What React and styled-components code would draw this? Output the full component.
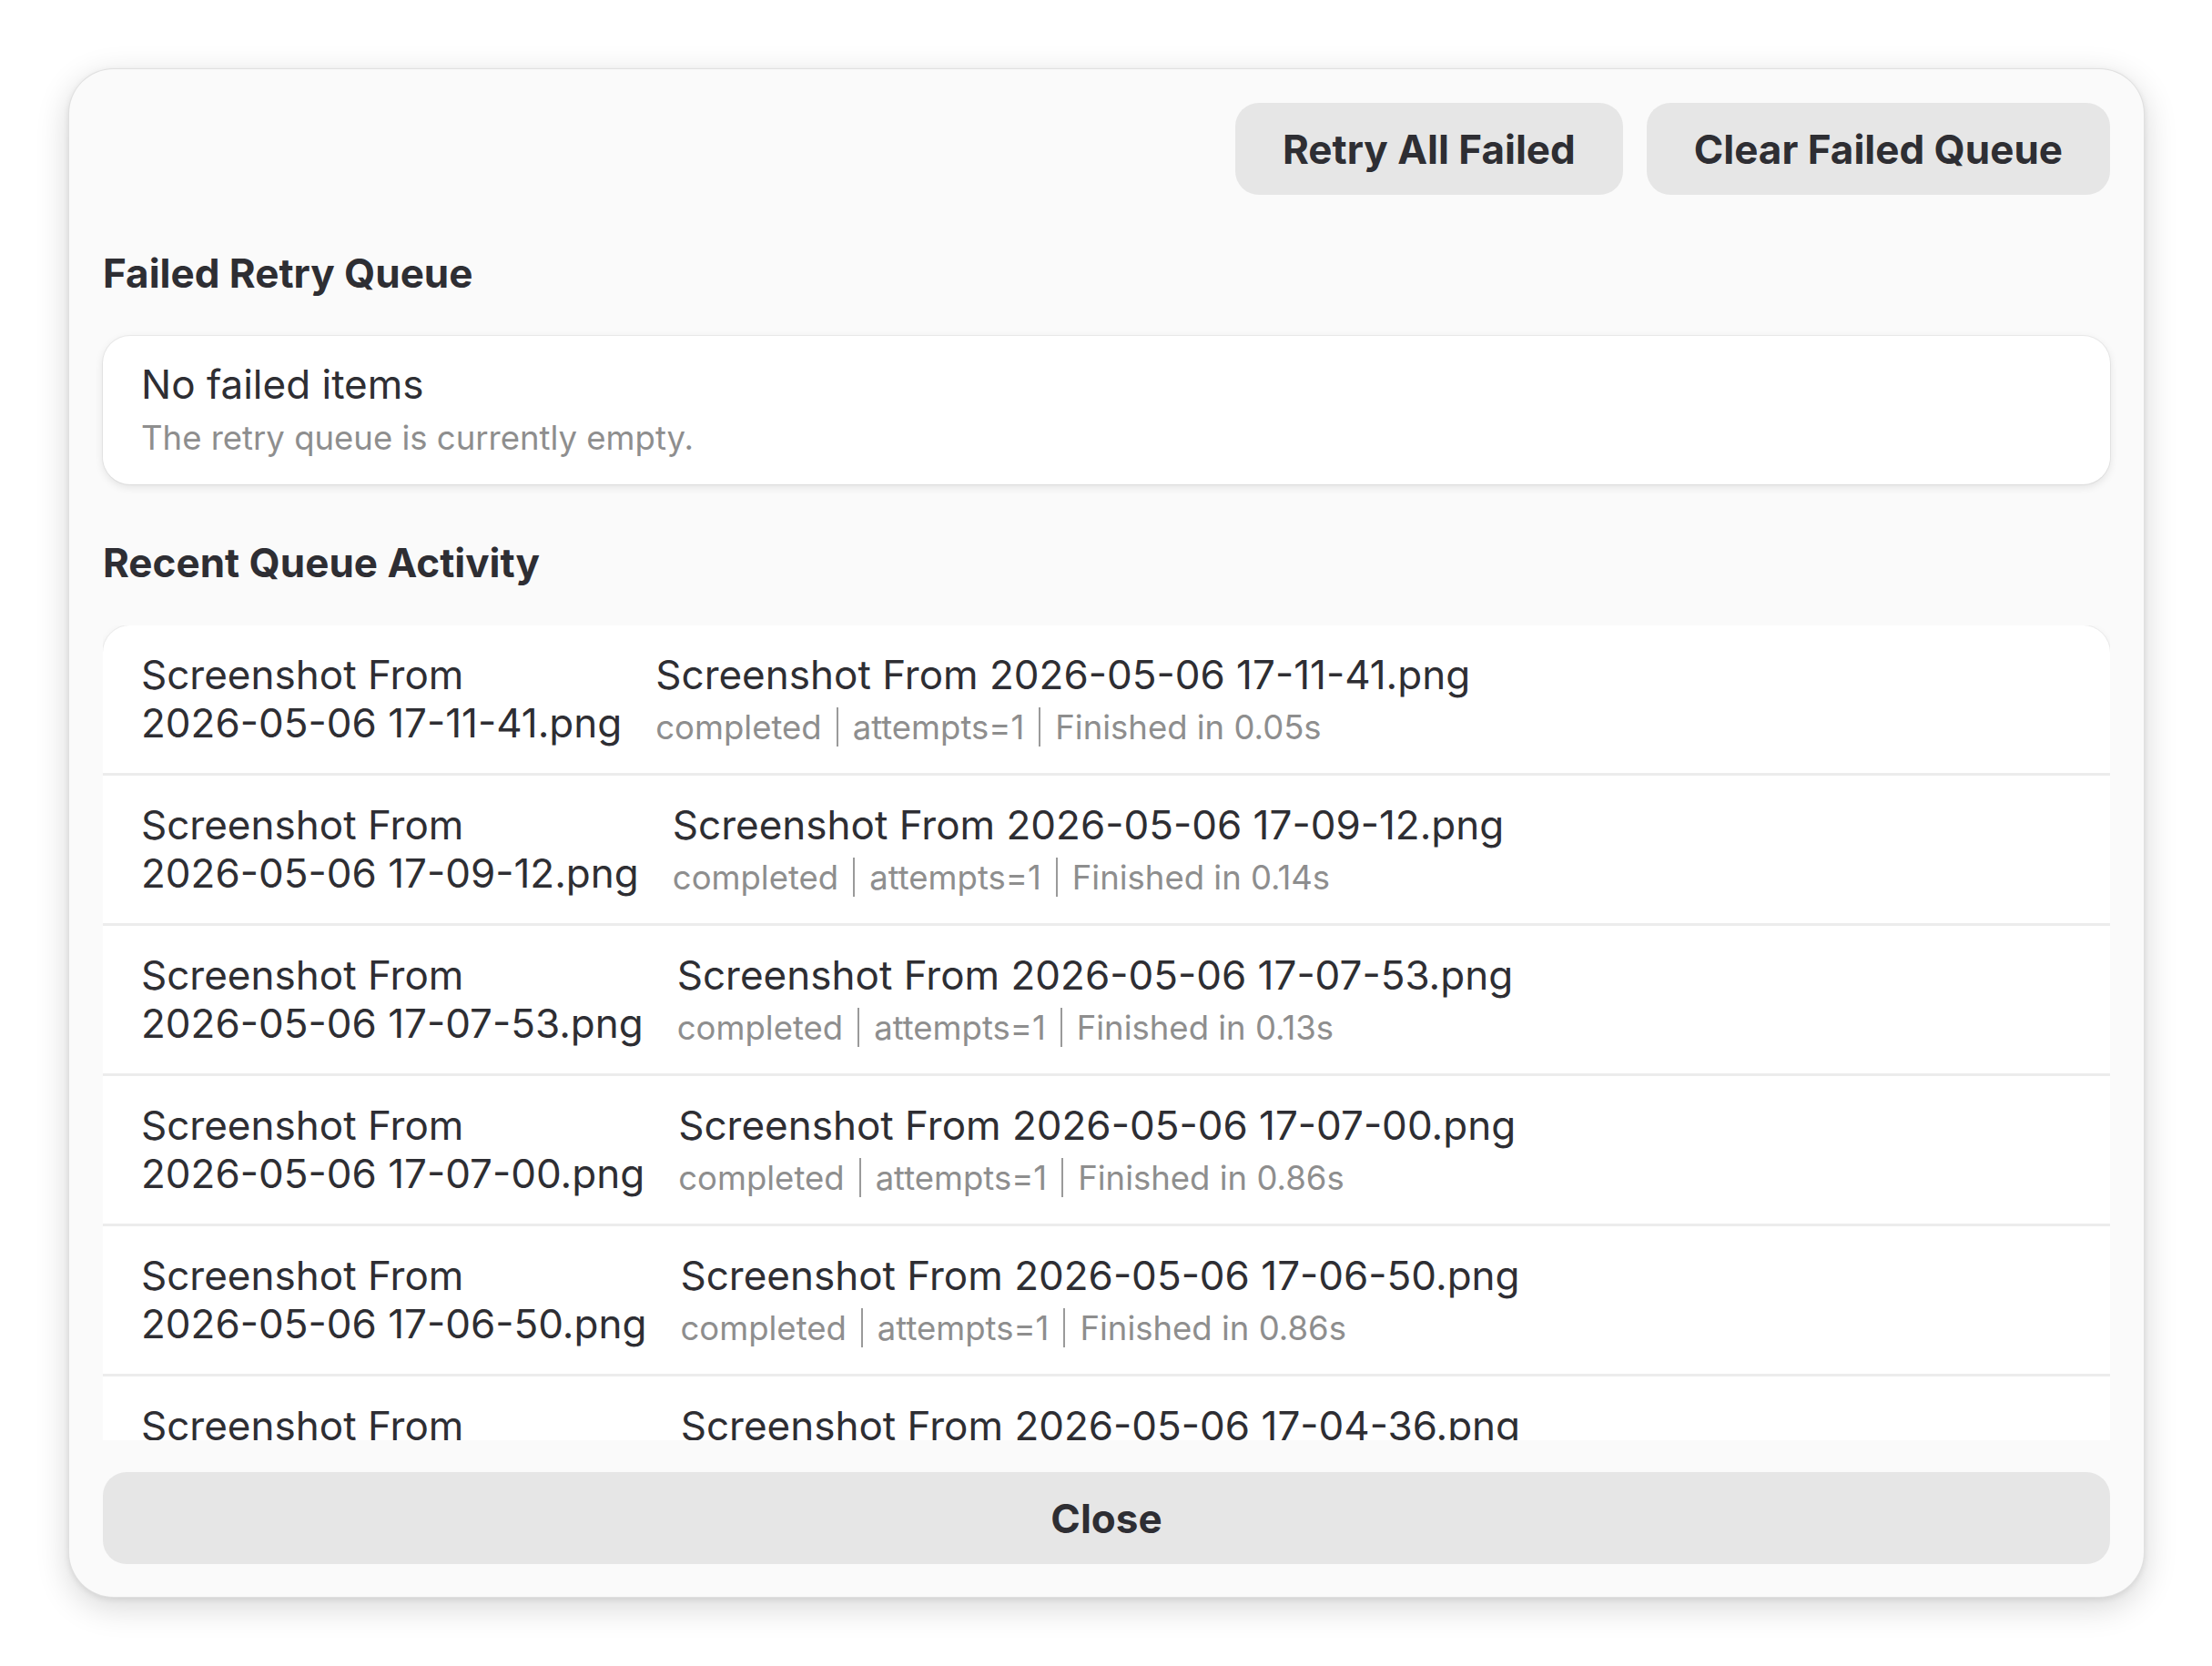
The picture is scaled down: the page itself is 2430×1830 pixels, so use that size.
import styled, { createGlobalStyle } from 'styled-components';

const GlobalStyle = createGlobalStyle`
  html, body {
    margin: 0;
    padding: 0;
    background: #ffffff;
    font-family: Inter, "Noto Sans", "Liberation Sans", sans-serif;
    color: #2e2e33;
  }
  * {
    box-sizing: border-box;
  }
`;

const Page = styled.div`
  width: 100vw;
  height: 100vh;
  padding: 75px 74px 75px 75px;
`;

const Dialog = styled.div`
  height: 100%;
  display: flex;
  flex-direction: column;
  padding: 37px 37px 36px;
  background: #fafafa;
  border: 1px solid rgba(0, 0, 0, 0.1);
  border-radius: 50px;
  box-shadow: 0 10px 36px rgba(0, 0, 0, 0.16), 0 2px 6px rgba(0, 0, 0, 0.08);
`;

const Toolbar = styled.div`
  display: flex;
  justify-content: flex-end;
  gap: 26px;
`;

const Button = styled.button`
  height: 101px;
  padding: 0 ${(p) => (p.$wide ? '0' : '52px')};
  width: ${(p) => (p.$wide ? '100%' : 'auto')};
  border: none;
  border-radius: 26px;
  background: #e6e6e6;
  color: #2e2e33;
  font-family: inherit;
  font-size: 44px;
  font-weight: 700;
  flex-shrink: 0;
`;

const SectionTitle = styled.h2`
  margin: 62px 0 45px;
  font-size: 44px;
  line-height: 48px;
  font-weight: 700;
  color: #2e2e33;
`;

const EmptyCard = styled.div`
  height: 163px;
  padding: 0 42px;
  display: flex;
  flex-direction: column;
  justify-content: center;
  background: #ffffff;
  border-radius: 30px;
  box-shadow: 0 0 0 1px rgba(0, 0, 0, 0.05), 0 3px 10px rgba(0, 0, 0, 0.1);
`;

const EmptyTitle = styled.div`
  font-size: 44px;
  line-height: 54px;
  color: #2e2e33;
`;

const EmptyHint = styled.div`
  margin-top: 7px;
  font-size: 36.5px;
  line-height: 50px;
  color: #8e8e8e;
`;

const ScrollArea = styled.div`
  flex: 1;
  min-height: 0;
  overflow-y: auto;
  scrollbar-width: none;
  margin-bottom: 35px;
`;

const ActivityList = styled.div`
  background: #ffffff;
  border-radius: 30px;
  box-shadow: 0 0 0 1px rgba(0, 0, 0, 0.04), 0 3px 10px rgba(0, 0, 0, 0.08);
`;

const Row = styled.div`
  display: flex;
  align-items: center;
  gap: 37px;
  padding: 0 42px;
  height: 165px;
  border-bottom: 3px solid #ececec;
`;

const FileName = styled.div`
  flex-shrink: 0;
  font-size: 44px;
  line-height: 53px;
  color: #2e2e33;
  white-space: nowrap;
`;

const Details = styled.div`
  display: flex;
  flex-direction: column;
  min-width: 0;
`;

const DetailTitle = styled.div`
  font-size: 44px;
  line-height: 53px;
  color: #2e2e33;
  white-space: nowrap;
`;

const Meta = styled.div`
  display: flex;
  align-items: center;
  margin-top: 8px;
  font-size: 36.5px;
  line-height: 46px;
  color: #8e8e8e;
  white-space: nowrap;
`;

const Divider = styled.span`
  width: 2px;
  height: 43px;
  margin: 0 16px;
  background: #9a9a9a;
`;

const activity = [
  { stamp: '17-11-41', time: '0.05s' },
  { stamp: '17-09-12', time: '0.14s' },
  { stamp: '17-07-53', time: '0.13s' },
  { stamp: '17-07-00', time: '0.86s' },
  { stamp: '17-06-50', time: '0.86s' },
  { stamp: '17-04-36', time: '0.91s' },
  { stamp: '17-02-18', time: '0.47s' },
];

const App = () => {
  return (
    <>
      <GlobalStyle />
      <Page>
        <Dialog>
          <Toolbar>
            <Button>Retry All Failed</Button>
            <Button>Clear Failed Queue</Button>
          </Toolbar>

          <SectionTitle>Failed Retry Queue</SectionTitle>
          <EmptyCard>
            <EmptyTitle>No failed items</EmptyTitle>
            <EmptyHint>The retry queue is currently empty.</EmptyHint>
          </EmptyCard>

          <SectionTitle>Recent Queue Activity</SectionTitle>
          <ScrollArea>
            <ActivityList>
              {activity.map((item) => {
                const name = `Screenshot From 2026-05-06 ${item.stamp}.png`;
                return (
                  <Row key={item.stamp}>
                    <FileName>
                      Screenshot From
                      <br />
                      2026-05-06 {item.stamp}.png
                    </FileName>
                    <Details>
                      <DetailTitle>{name}</DetailTitle>
                      <Meta>
                        completed
                        <Divider />
                        attempts=1
                        <Divider />
                        Finished in {item.time}
                      </Meta>
                    </Details>
                  </Row>
                );
              })}
            </ActivityList>
          </ScrollArea>

          <Button $wide>Close</Button>
        </Dialog>
      </Page>
    </>
  );
};

export default App;
